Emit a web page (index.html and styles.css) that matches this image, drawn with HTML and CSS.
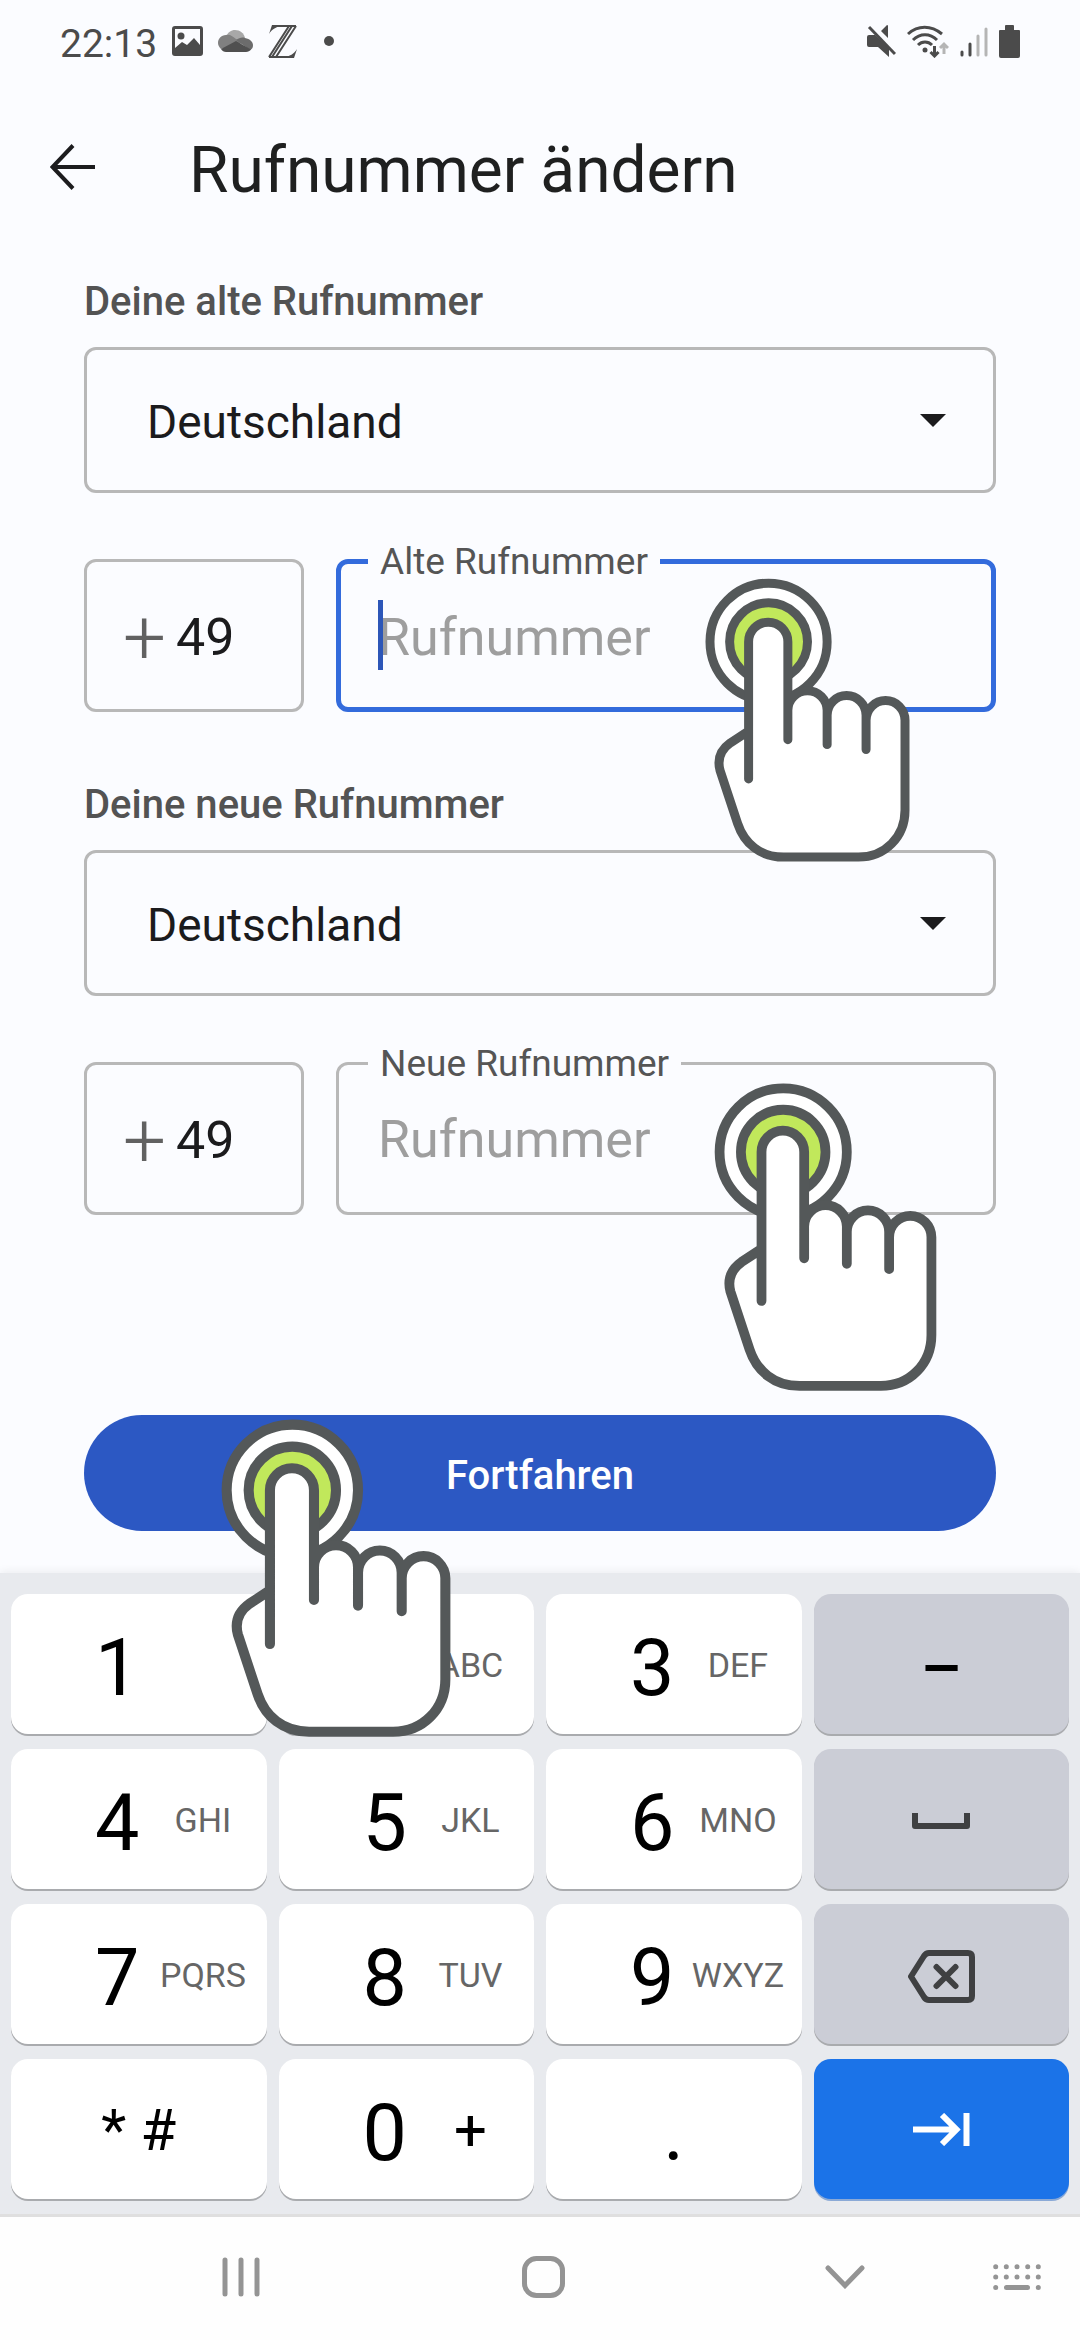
FILE: index.html
```html
<!DOCTYPE html>
<html lang="de">
<head>
<meta charset="utf-8">
<meta name="viewport" content="width=device-width, initial-scale=1">
<title>Rufnummer ändern</title>
<link rel="stylesheet" href="styles.css">
</head>
<body>
<svg class="sprite" aria-hidden="true">
  <symbol id="tap-hand" viewBox="134 113 616 852">
    <g stroke="#545859" stroke-width="27" stroke-linecap="round" stroke-linejoin="round">
      <circle cx="325" cy="304" r="176" fill="#fff"/>
      <circle cx="325" cy="304" r="117" fill="#c1e85b"/>
      <path fill="#fff" stroke="none" d="M265 572V304A59 59 0 0 1 383 304V510A59 59 0 0 1 501 525A58 59 0 0 1 618 540A58 59 0 0 1 735 540V810C735 890 675 951 595 951H370C300 951 252 910 232 850L179 690C170 655 182 628 210 608Z"/>
      <path fill="none" d="M265 572L210 608C182 628 170 655 179 690L232 850C252 910 300 951 370 951H595C675 951 735 890 735 810V540A58 59 0 0 0 618 540V628M618 525A58 59 0 0 0 501 525V613M501 510A59 59 0 0 0 383 510M618 540V525M501 525V510M383 598V304A59 59 0 0 0 265 304V716"/>
    </g>
  </symbol>
</svg>

<div class="screen">
  <div class="status-bar">
    <div class="status-group status-left">
      <span class="clock">22:13</span>
      <svg width="31" height="30" viewBox="0 0 31 30" fill="#4b4b4b"><path fill-rule="evenodd" d="M3 0H28A3 3 0 0 1 31 3V27A3 3 0 0 1 28 30H3A3 3 0 0 1 0 27V3A3 3 0 0 1 3 0ZM3 3V22L10 16L15 19L22 12L28 19V3Z"/><circle cx="9" cy="10" r="3.5"/></svg>
      <svg width="35" height="22" viewBox="0 0 35 22"><path fill="#a8a8a8" d="M8 7C10 2 13 0 17 0C22 0 26 3 27 8L20 12Z"/><path fill="#808080" d="M8 5C12 4 14 6 18 9L25 13L3 19C1 17 0 15 0 13C0 9 3 5 8 5Z"/><path fill="#6c6c6c" d="M18 10C21 8 24 7 27 8C32 9 35 12 35 15C35 18 34 19 32 20Z"/><path fill="#505050" d="M3 19L18 11L33 19.500C32 21 30 22 28 22H8C6 22 4 21 3 19Z"/></svg>
      <svg width="29" height="33" viewBox="0 0 29 33" fill="none" stroke="#4b4b4b"><path stroke-width="2" d="M5 1H28M1 32H25"/><path stroke-width="2" d="M21 1L1 32M24 1L4 32M28 1L8 32"/><path fill="#4b4b4b" stroke="none" d="M4 0H15C8 2 4 4 1 9ZM26 33H15C22 31 26 29 29 24Z"/></svg>
      <svg class="more-dot" width="10" height="10" viewBox="0 0 10 10"><circle cx="5" cy="5" r="5" fill="#4b4b4b"/></svg>
    </div>
    <div class="status-group status-right">
      <svg width="29" height="32" viewBox="0 0 29 32" fill="#4b4b4b"><path d="M2 10H8L22 23V32L11 22H2Q0 22 0 20V12Q0 10 2 10ZM14 6L20 0Q21 0 21 1V13Z"/><path fill="none" stroke="#4b4b4b" stroke-width="3" d="M2 2L28 29"/></svg>
      <svg width="42" height="33" viewBox="0 0 42 33" fill="none" stroke="#4b4b4b" stroke-width="3"><path d="M1 9C11 0 24 0 35 9M6 15C13 8 23 8 30 15M11 20C15 16 21 16 25 20"/><circle cx="18" cy="25" r="2.500" fill="#4b4b4b" stroke="none"/><path d="M27.500 21V31M23.500 27L27.500 31L31.500 27"/><path stroke="#b5b5b5" d="M37 29V19M33 23L37 19L41 23"/></svg>
      <svg width="28" height="32" viewBox="0 0 28 32" fill="none" stroke-width="3" stroke-linecap="round"><path stroke="#4b4b4b" d="M2 27V30M10 19V30"/><path stroke="#b5b5b5" d="M18 11V30M26 4V30"/></svg>
      <svg width="21" height="33" viewBox="0 0 21 33" fill="#4b4b4b"><path d="M6 5V1Q6 0 7 0H14Q15 0 15 1V5H20Q21 5 21 6V31Q21 33 19 33H2Q0 33 0 31V6Q0 5 1 5Z"/></svg>
    </div>
  </div>

  <header class="app-bar">
    <button class="back" type="button" aria-label="Zurück">
      <svg width="45" height="46" viewBox="0 0 45 46" fill="none" stroke="#1c1c1e" stroke-width="4"><path d="M45 23H3M23 1.500L2.500 23L23 44.500"/></svg>
    </button>
    <h1>Rufnummer ändern</h1>
  </header>

  <main>
    <form>
      <section class="group">
        <label class="group-label" for="country-old">Deine alte Rufnummer</label>
        <div class="select-box">
          <select id="country-old"><option>Deutschland</option></select>
          <svg width="26" height="13" viewBox="0 0 26 13" fill="#1b1b1d"><path d="M0 0H26L13 13Z"/></svg>
        </div>
        <div class="number-row">
          <label class="prefix"><span class="plus">+</span><input type="text" value="49" aria-label="Alte Ländervorwahl"></label>
          <fieldset class="number focused">
            <legend><label for="number-old">Alte Rufnummer</label></legend>
            <input id="number-old" type="tel" placeholder="Rufnummer">
            <span class="caret"></span>
          </fieldset>
          <svg class="tap tap-old" aria-hidden="true"><use href="#tap-hand"/></svg>
        </div>
      </section>

      <section class="group">
        <label class="group-label" for="country-new">Deine neue Rufnummer</label>
        <div class="select-box">
          <select id="country-new"><option>Deutschland</option></select>
          <svg width="26" height="13" viewBox="0 0 26 13" fill="#1b1b1d"><path d="M0 0H26L13 13Z"/></svg>
        </div>
        <div class="number-row">
          <label class="prefix"><span class="plus">+</span><input type="text" value="49" aria-label="Neue Ländervorwahl"></label>
          <fieldset class="number">
            <legend><label for="number-new">Neue Rufnummer</label></legend>
            <input id="number-new" type="tel" placeholder="Rufnummer">
          </fieldset>
          <svg class="tap tap-new" aria-hidden="true"><use href="#tap-hand"/></svg>
        </div>
      </section>

      <div class="actions">
        <button class="submit" type="submit">Fortfahren</button>
        <svg class="tap tap-submit" aria-hidden="true"><use href="#tap-hand"/></svg>
      </div>
    </form>
  </main>

  <div class="keyboard">
    <button class="key" type="button"><span class="digit">1</span></button>
    <button class="key" type="button"><span class="digit">2</span><span class="hint">ABC</span></button>
    <button class="key" type="button"><span class="digit">3</span><span class="hint">DEF</span></button>
    <button class="key center grey" type="button"><span class="digit">−</span></button>

    <button class="key" type="button"><span class="digit">4</span><span class="hint">GHI</span></button>
    <button class="key" type="button"><span class="digit">5</span><span class="hint">JKL</span></button>
    <button class="key" type="button"><span class="digit">6</span><span class="hint">MNO</span></button>
    <button class="key center grey" type="button" aria-label="Leerzeichen">
      <svg width="58" height="16" viewBox="0 0 58 16" fill="none" stroke="#3f4042" stroke-width="6" stroke-linejoin="round"><path d="M3 0V13H55V0"/></svg>
    </button>

    <button class="key" type="button"><span class="digit">7</span><span class="hint">PQRS</span></button>
    <button class="key" type="button"><span class="digit">8</span><span class="hint">TUV</span></button>
    <button class="key" type="button"><span class="digit">9</span><span class="hint">WXYZ</span></button>
    <button class="key center grey" type="button" aria-label="Löschen">
      <svg width="67" height="53" viewBox="0 0 67 53" fill="none" stroke="#3f4042" stroke-width="6" stroke-linejoin="round" stroke-linecap="round"><path d="M21 3H60Q64 3 64 7V46Q64 50 60 50H21Q18 50 16 47L3 26.500L16 6Q18 3 21 3ZM28.500 17L47.500 36M47.500 17L28.500 36"/></svg>
    </button>

    <button class="key center" type="button"><span class="symbol">* #</span></button>
    <button class="key" type="button"><span class="digit">0</span><span class="hint symbol">+</span></button>
    <button class="key center" type="button"><span class="digit">.</span></button>
    <button class="key center blue" type="button" aria-label="Weiter">
      <svg width="57" height="33" viewBox="0 0 57 33" fill="none" stroke="#fff" stroke-width="6"><path d="M0 16.500H43M29 2L43.500 16.500L29 31M53.500 0V33"/></svg>
    </button>
  </div>

  <nav class="nav-bar">
    <button type="button" aria-label="Letzte Apps"><svg width="38" height="40" viewBox="0 0 38 40" stroke="#949494" stroke-width="5" stroke-linecap="round"><path d="M3 3V37M19 3V37M35 3V37"/></svg></button>
    <button type="button" aria-label="Startbildschirm"><svg width="43" height="42" viewBox="0 0 43 42" fill="none" stroke="#949494" stroke-width="5"><rect x="2.500" y="2.500" width="38" height="37" rx="12"/></svg></button>
    <button type="button" aria-label="Tastatur ausblenden"><svg width="40" height="24" viewBox="0 0 40 24" fill="none" stroke="#949494" stroke-width="5" stroke-linecap="round"><path d="M3 3L20 20.500L37 3"/></svg></button>
    <button class="nav-keyboard" type="button" aria-label="Tastatur wechseln"><svg width="48" height="26" viewBox="0 0 48 26" fill="none" stroke="#949494" stroke-width="5" stroke-linecap="round"><path d="M2.700 2.700h0M13.300 2.700h0M24 2.700h0M34.700 2.700h0M45.300 2.700h0M2.700 13h0M13.300 13h0M24 13h0M34.700 13h0M45.300 13h0M2.700 23.400h0M13.500 23.400H34.500M45.300 23.400h0"/></svg></button>
  </nav>
</div>
</body>
</html>
```
FILE: styles.css
```css
* {
  box-sizing: border-box;
}

body {
  margin: 0;
  background: #fbfcff;
  color: #1b1b1d;
  font-family: Roboto, "Liberation Sans", sans-serif;
}

button,
input,
select {
  margin: 0;
  padding: 0;
  border: 0;
  background: none;
  color: inherit;
  font: inherit;
}

svg {
  display: block;
  flex: none;
}

.sprite {
  position: absolute;
  width: 0;
  height: 0;
}

.screen {
  display: flex;
  flex-direction: column;
  min-height: 100vh;
}

/* Status bar */

.status-bar {
  display: flex;
  justify-content: space-between;
  height: 82px;
  padding: 0 60px;
}

.status-group {
  display: flex;
  align-items: center;
}

.status-left {
  gap: 15px;
}

.status-right {
  gap: 11px;
}

.clock {
  padding-top: 6px;
  color: #4b4b4b;
  font-size: 39px;
}

.more-dot {
  margin-left: 12px;
}

/* App bar */

.app-bar {
  display: flex;
  align-items: center;
  gap: 94px;
  height: 170px;
  padding: 0 50px;
}

h1 {
  margin: 0;
  padding-top: 6px;
  color: #1f2020;
  font-size: 64px;
  font-weight: 400;
}

/* Form */

main {
  flex: 1;
  padding: 27px 84px 42px;
}

.group {
  margin-bottom: 70px;
}

.group-label {
  display: block;
  margin-bottom: 22px;
  color: #535353;
  font-size: 40px;
  font-weight: 500;
  line-height: 46px;
}

.select-box {
  display: grid;
  align-items: center;
}

.select-box select,
.select-box svg {
  grid-area: 1 / 1;
}

.select-box select {
  width: 100%;
  height: 146px;
  padding: 4px 60px 0;
  border: 3px solid #b8b8b8;
  border-radius: 12px;
  appearance: none;
  font-size: 46px;
}

.select-box svg {
  justify-self: end;
  margin-right: 50px;
  pointer-events: none;
}

.number-row {
  position: relative;
  display: flex;
  align-items: flex-end;
  gap: 32px;
  height: 172px;
  margin-top: 47px;
}

.prefix {
  display: flex;
  align-items: center;
  gap: 10px;
  width: 220px;
  height: 153px;
  padding: 3px 0 0 36px;
  border: 3px solid #b8b8b8;
  border-radius: 12px;
}

.prefix input {
  width: 80px;
  font-size: 52px;
}

.plus {
  color: #616161;
  font-size: 76px;
  font-weight: 300;
}

.number {
  position: relative;
  flex: 1;
  min-width: 0;
  height: 172px;
  margin: 0;
  padding: 0 29px;
  border: 3px solid #b8b8b8;
  border-radius: 12px;
}

.number.focused {
  height: 171px;
  padding: 0 27px;
  border: 5px solid #336bdc;
}

.number legend {
  padding: 0 12px;
  color: #555;
  font-size: 37px;
  line-height: 41px;
}

.number input {
  display: block;
  width: 100%;
  height: 110px;
  padding-left: 10px;
  caret-color: transparent;
  font-size: 52px;
  outline: none;
}

.number input::placeholder {
  color: #9e9e9e;
  opacity: 1;
}

.caret {
  position: absolute;
  left: 37px;
  bottom: 37px;
  width: 5px;
  height: 70px;
  background: #2c56b8;
}

.actions {
  position: relative;
  margin-top: 200px;
}

.submit {
  width: 100%;
  height: 116px;
  padding-top: 4px;
  border-radius: 58px;
  background: #2c58c3;
  color: #fff;
  font-size: 40px;
  font-weight: 500;
}

/* Tap markers */

.tap {
  position: absolute;
  z-index: 2;
  pointer-events: none;
}

.tap-old {
  top: 38px;
  right: 86px;
  width: 205px;
  height: 284px;
}

.tap-new {
  top: 40px;
  right: 59px;
  width: 223px;
  height: 308px;
}

.tap-submit {
  top: 4px;
  left: 137px;
  width: 230px;
  height: 318px;
}

/* Keyboard */

.keyboard {
  display: grid;
  grid-template-columns: repeat(4, 1fr);
  grid-auto-rows: 140px;
  gap: 15px 12px;
  padding: 21px 11px 15px;
  background: #e8eaee;
  box-shadow: 0 -2px 8px rgba(0, 0, 0, 0.06);
}

.key {
  display: flex;
  align-items: center;
  padding: 2px 0 0 84px;
  border-radius: 17px;
  background: #fff;
  box-shadow: 0 2px 0 #a9abae;
  color: #000;
}

.key.center {
  justify-content: center;
  padding-left: 0;
}

.key.grey {
  padding-top: 4px;
  background: #cbcdd6;
}

.key.blue {
  padding-top: 0;
  background: #1b73e8;
  box-shadow: 0 2px 0 #8aa9d6;
}

.digit {
  padding-top: 6px;
  font-size: 79px;
}

.hint {
  flex: 1;
  color: #666;
  font-size: 34px;
  text-align: center;
}

.symbol {
  color: #000;
  font-size: 58px;
}

/* System navigation */

.nav-bar {
  display: grid;
  grid-template-columns: repeat(3, 1fr) 84px;
  height: 126px;
  padding: 0 0 3px 90px;
  border-top: 3px solid #dfdfdf;
  background: #fefefe;
}

.nav-bar button {
  display: flex;
  align-items: center;
  justify-content: center;
}

.nav-bar .nav-keyboard {
  justify-self: end;
  padding-right: 39px;
}
```
